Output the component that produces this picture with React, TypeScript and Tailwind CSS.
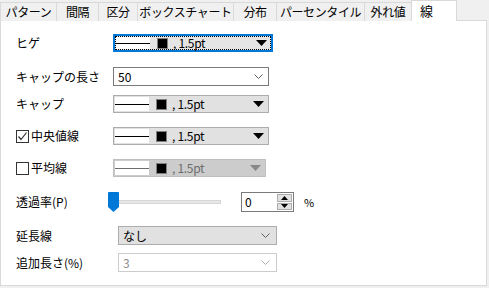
import React from 'react';

const FONT = { fontFamily: '"Noto Sans CJK JP", "Liberation Sans", sans-serif' };

const tabs = [
  { label: 'パターン', w: 56 },
  { label: '間隔', w: 42 },
  { label: '区分', w: 39 },
  { label: 'ボックスチャート', w: 96 },
  { label: '分布', w: 43 },
  { label: 'パーセンタイル', w: 88 },
  { label: '外れ値', w: 47 },
];

function Chevron({ color = '#606060' }: { color?: string }) {
  return (
    <svg width="9" height="5" viewBox="0 0 9 5" className="shrink-0">
      <path d="M0.5 0.5 L4.5 4.5 L8.5 0.5" fill="none" stroke={color} strokeWidth="1" />
    </svg>
  );
}

function Tri({ color = '#000' }: { color?: string }) {
  return (
    <svg width="11" height="6" viewBox="0 0 11 6" className="shrink-0">
      <path d="M0 0 H11 L5.5 6 Z" fill={color} />
    </svg>
  );
}

// 線種・色・太さのコンボ
function LineCombo({ focused, disabled, w }: { focused?: boolean; disabled?: boolean; w: number }) {
  const outer = focused
    ? 'border-2 border-[#0078d7] bg-[#e5e5e5]'
    : disabled
      ? 'border border-[#bfbfbf] bg-[#cccccc]'
      : 'border border-[#adadad] bg-[#e1e1e1]';
  return (
    <div className={`flex h-full items-stretch ${outer}`} style={{ width: w }}>
      <div className={`flex flex-1 items-center ${focused ? 'border border-dotted border-black' : 'p-px'}`}>
        <div className="flex h-full w-[34px] items-center bg-white">
          <div className={`h-px w-full ${disabled ? 'bg-[#6d6d6d]' : 'bg-black'}`} />
        </div>
        <div className="ml-[7px] h-[11px] w-[11px] border border-[#808080] bg-black" />
        <span className={`ml-[5px] text-[12px] leading-none tracking-[-0.3px] ${disabled ? 'text-[#6d6d6d]' : 'text-black'}`}>, 1.5pt</span>
        <div className="flex-1" />
        <div className="mr-[3px]">
          <Tri color={disabled ? '#888888' : '#000'} />
        </div>
      </div>
    </div>
  );
}

function Label({ children }: { children: React.ReactNode }) {
  return <div className="w-[97px] shrink-0 whitespace-nowrap text-[12px] leading-none text-black">{children}</div>;
}

function CheckLabel({ checked, children }: { checked?: boolean; children: React.ReactNode }) {
  return (
    <div className="flex w-[97px] shrink-0 items-center whitespace-nowrap text-[12px] leading-none text-black">
      <div className="flex h-[13px] w-[13px] items-center justify-center border border-[#333] bg-white">
        {checked && (
          <svg width="11" height="11" viewBox="0 0 11 11">
            <path d="M1.5 5.5 L4 8.5 L9.5 1.5" fill="none" stroke="#333" strokeWidth="1.2" />
          </svg>
        )}
      </div>
      <span className="ml-[2px]">{children}</span>
    </div>
  );
}

export default function App() {
  return (
    <div className="relative h-[288px] w-[489px] overflow-hidden bg-[#f0f0f0]" style={FONT}>
      {/* タブ */}
      <div className="flex h-[21px] items-end">
        {tabs.map((t) => (
          <div
            key={t.label}
            className="-mr-px flex h-[19px] items-center justify-center whitespace-nowrap border border-b-0 border-[#d9d9d9] bg-[#f0f0f0] text-[12px] leading-none tracking-[-0.4px] text-black"
            style={{ width: t.w + 1 }}
          >
            {t.label}
          </div>
        ))}
        <div className="relative z-10 flex h-[21px] w-[46px] items-start border border-b-0 border-[#d9d9d9] bg-white pl-[8px] pt-[3px] text-[13px] leading-none text-black">
          線
        </div>
      </div>

      {/* パネル */}
      <div className="-mt-px h-[266px] w-[487px] border border-[#d9d9d9] bg-white pl-[15px] pt-[13px]">
        <div className="flex h-[18px] items-center">
          <Label>ヒゲ</Label>
          <LineCombo focused w={160} />
        </div>

        <div className="mt-[15px] flex h-[19px] items-center">
          <Label>キャップの長さ</Label>
          <div className="flex h-full w-[156px] items-center border border-[#7a7a7a] bg-white pl-[4px] pr-[5px]">
            <span className="flex-1 text-[12px] leading-none">50</span>
            <Chevron />
          </div>
        </div>

        <div className="mt-[9px] flex h-[18px] items-center">
          <Label>キャップ</Label>
          <LineCombo w={156} />
        </div>

        <div className="mt-[14px] flex h-[18px] items-center">
          <CheckLabel checked>中央値線</CheckLabel>
          <LineCombo w={156} />
        </div>

        <div className="mt-[14px] flex h-[18px] items-center">
          <CheckLabel>平均線</CheckLabel>
          <LineCombo disabled w={153} />
        </div>

        {/* 透過率 */}
        <div className="mt-[15px] flex h-[20px] items-center">
          <div className="w-[92px] shrink-0 whitespace-nowrap text-[12px] leading-none">透過率(P)</div>
          <div className="relative flex h-full w-[113px] items-center">
            <div className="h-[4px] w-full border border-[#d6d6d6] bg-[#e7e7e7]" />
            <svg className="absolute left-0 top-0" width="11" height="20" viewBox="0 0 11 20">
              <path d="M0 1 Q0 0 1 0 H10 Q11 0 11 1 V15 L5.5 20 L0 15 Z" fill="#0078d7" />
            </svg>
          </div>
          <div className="ml-[20px] flex h-full w-[53px] border border-[#7a7a7a] bg-white">
            <span className="flex-1 pl-[3px] pt-[3px] text-[12px] leading-none">0</span>
            <div className="flex w-[16px] flex-col gap-px py-px pr-px">
              <div className="flex flex-1 items-center justify-center border border-[#adadad] bg-[#e1e1e1]">
                <svg width="7" height="4" viewBox="0 0 7 4"><path d="M0 4 H7 L3.5 0 Z" fill="#000" /></svg>
              </div>
              <div className="flex flex-1 items-center justify-center border border-[#adadad] bg-[#e1e1e1]">
                <svg width="7" height="4" viewBox="0 0 7 4"><path d="M0 0 H7 L3.5 4 Z" fill="#000" /></svg>
              </div>
            </div>
          </div>
          <span className="ml-[10px] text-[11px] leading-none">%</span>
        </div>

        <div className="mt-[14px] flex h-[19px] items-center">
          <div className="w-[102px] shrink-0 text-[12px] leading-none">延長線</div>
          <div className="flex h-full w-[159px] items-center border border-[#adadad] bg-[#e1e1e1] pl-[4px] pr-[6px]">
            <span className="flex-1 text-[12px] leading-none">なし</span>
            <Chevron />
          </div>
        </div>

        <div className="mt-[8px] flex h-[19px] items-center">
          <div className="w-[102px] shrink-0 whitespace-nowrap text-[12px] leading-none">追加長さ(%)</div>
          <div className="flex h-full w-[159px] items-center border border-[#cccccc] bg-white pl-[4px] pr-[6px]">
            <span className="flex-1 text-[12px] leading-none text-[#8d8d8d]">3</span>
            <Chevron color="#b0b0b0" />
          </div>
        </div>
      </div>
    </div>
  );
}
